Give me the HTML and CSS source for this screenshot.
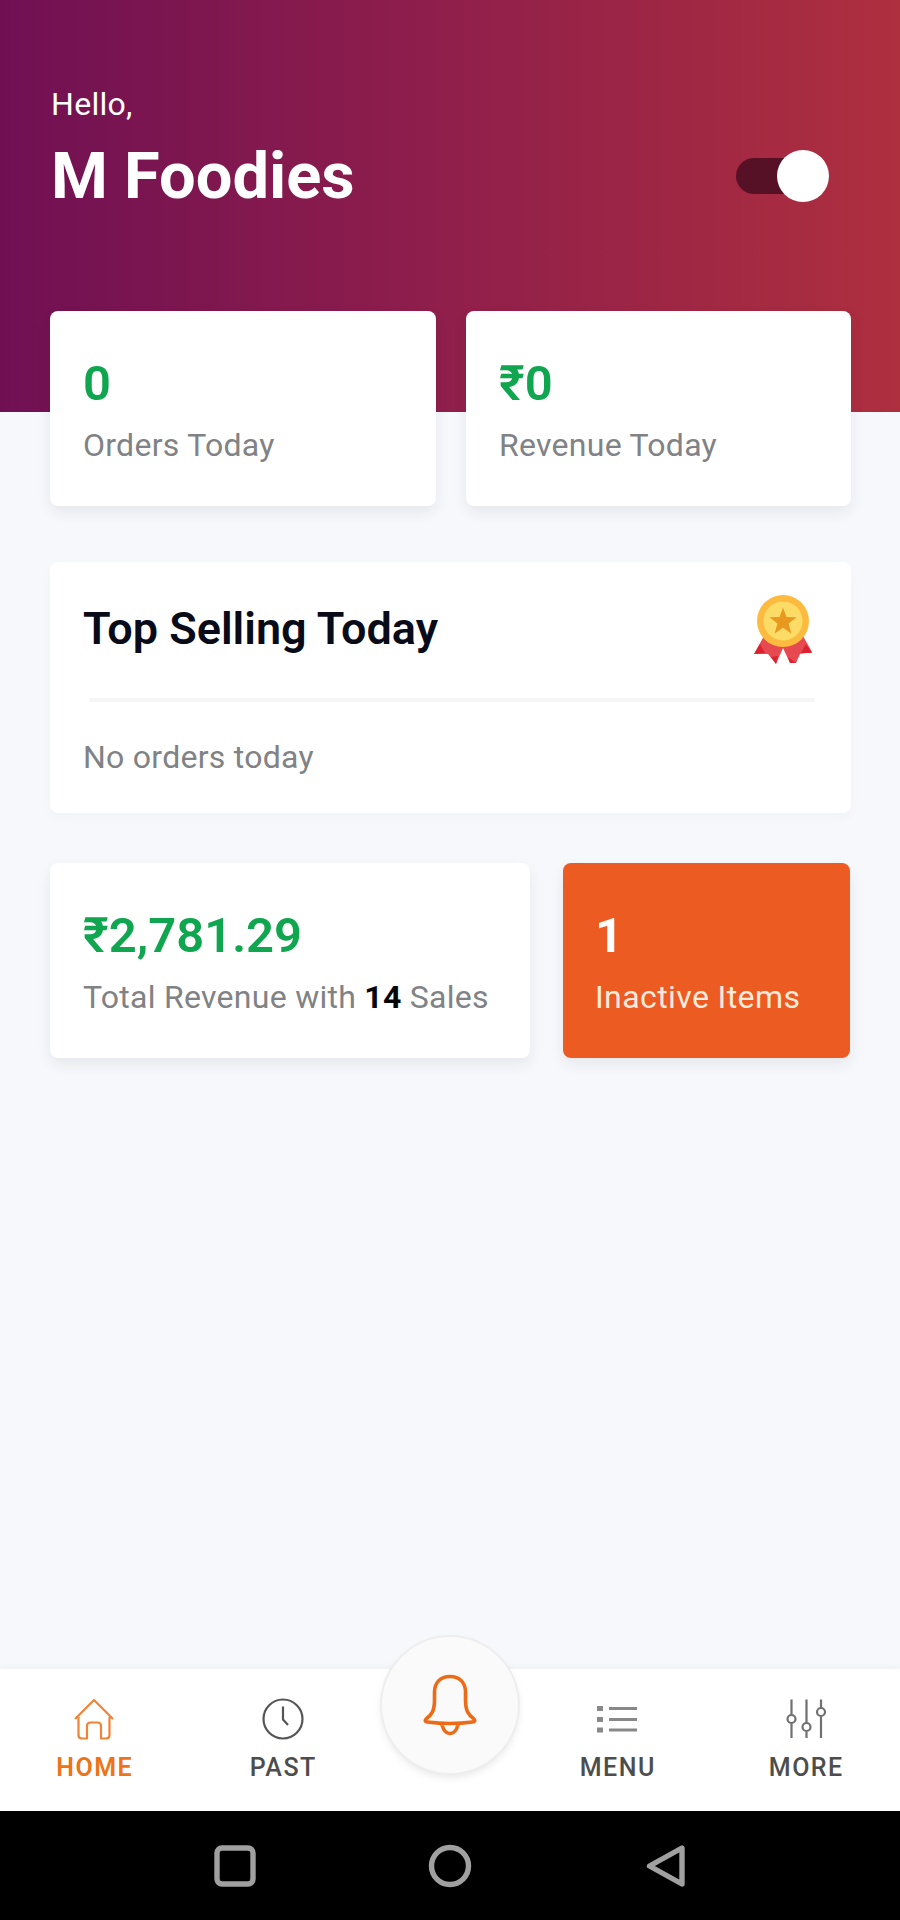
FILE: index.html
```html
<!DOCTYPE html>
<html lang="en">
<head>
<meta charset="utf-8">
<title>M Foodies</title>
<link rel="stylesheet" href="styles.css">
</head>
<body>
<div class="app">
  <header class="hero">
    <p class="greeting">Hello,</p>
    <div class="title-row">
      <h1 class="store">M Foodies</h1>
      <div class="toggle"><div class="knob"></div></div>
    </div>
  </header>
  <main class="content">
    <section class="row today">
      <article class="card"><p class="value">0</p><p class="label">Orders Today</p></article>
      <article class="card"><p class="value">₹0</p><p class="label">Revenue Today</p></article>
    </section>
    <section class="selling">
      <div class="selling-head">
        <h2 class="heading">Top Selling Today</h2>
        <svg class="medal" width="58" height="71" viewBox="0 0 58 71">
          <path d="M10 42 L0 60 L14 60 L22 70 L29 54 L36 69 L42 69 L46 60 L58 58 L49 42 Z" fill="#e64a50"/>
          <path d="M6 50 L0 60 L11 59 Z M52 50 L58 59 L47 59 Z M17 63 L22 70 L24 62 Z M34 63 L36 69 L42 69 Z" fill="#dc2230"/>
          <circle cx="29" cy="27" r="26" fill="#fcbb3f"/>
          <circle cx="29" cy="27" r="19.500" fill="#fddb67"/>
          <path d="M29 13.500 L32.400 23 L42.500 23.300 L34.500 29.400 L37.400 39.500 L29 33.700 L20.600 39.500 L23.500 29.400 L15.500 23.300 L25.600 23 Z" fill="#e8981f"/>
        </svg>
      </div>
      <div class="divider"></div>
      <p class="label">No orders today</p>
    </section>
    <section class="row totals">
      <article class="card"><p class="value">₹2,781.29</p><p class="label">Total Revenue with <b class="count">14</b> Sales</p></article>
      <article class="card inactive"><p class="value">1</p><p class="label">Inactive Items</p></article>
    </section>
  </main>
  <nav class="tabs">
    <a class="tab active">
      <svg class="icon" width="42" height="44" viewBox="0 0 42 44"><path d="M2 22 L21 3 L40 22 M5.500 20 V38 Q5.500 41.500 9 41.500 H14 V29 Q14 25.500 17.500 25.500 H24.500 Q28 25.500 28 29 V41.500 H33 Q36.500 41.500 36.500 38 V20"/></svg>
      <span>HOME</span>
    </a>
    <a class="tab">
      <svg class="icon" width="42" height="44" viewBox="0 0 42 44"><circle cx="21" cy="22" r="19.500"/><path d="M21 9.500 V22.500 L26 28"/></svg>
      <span>PAST</span>
    </a>
    <a class="alert">
      <svg class="bell" width="54" height="62" viewBox="0 0 54 62"><path d="M27 2.500 C17 2.500 11.500 9 11.500 18 V26 C11.500 37 8.500 41 3.500 44.500 C1.500 46.500 2 48 4.500 48 Q27 51 49.500 48 C52 48 52.500 46.500 50.500 44.500 C45.500 41 42.500 37 42.500 26 V18 C42.500 9 37 2.500 27 2.500 Z M18 50 Q20 52 20.500 55 Q23 59.500 27 59.500 Q31 59.500 33.500 55 Q34 52 36 50"/></svg>
    </a>
    <a class="tab">
      <svg class="icon menu-icon" width="42" height="44" viewBox="0 0 42 44"><path d="M13 11.500 H41 M13 22.500 H41 M13 33 H41"/><path class="dots" d="M1 11.500 H7 M1 22.500 H7 M1 33 H7"/></svg>
      <span>MENU</span>
    </a>
    <a class="tab">
      <svg class="icon more-icon" width="42" height="44" viewBox="0 0 42 44"><path d="M6.500 2.500 V17.500 M6.500 26 V41 M21.500 2.500 V26 M21.500 34.500 V41 M36 2.500 V10.500 M36 19 V41"/><circle cx="6.500" cy="22" r="4"/><circle cx="21.500" cy="30" r="4"/><circle cx="36" cy="15" r="4"/></svg>
      <span>MORE</span>
    </a>
  </nav>
  <footer class="system">
    <svg width="44" height="44" viewBox="0 0 44 44"><rect x="4" y="4" width="36" height="36" rx="5"/></svg>
    <svg width="44" height="44" viewBox="0 0 44 44"><circle cx="22" cy="22" r="18.500"/></svg>
    <svg width="44" height="44" viewBox="0 0 44 44"><path d="M6.500 22 L39 4 V40 Z"/></svg>
  </footer>
</div>
</body>
</html>
```
FILE: styles.css
```css
* { box-sizing: border-box; margin: 0; padding: 0; }
body { font-family: Roboto, "Liberation Sans", sans-serif; background: #f6f8fc; }
.app { width: 900px; height: 1920px; display: flex; flex-direction: column; overflow: hidden; }

.hero {
  height: 412px;
  flex: none;
  padding: 84px 71px 0 51px;
  background: linear-gradient(90deg, #701053 0%, #901f4b 50%, #ae2f3e 100%);
  color: #fff;
}
.greeting { font-size: 32px; line-height: 40px; letter-spacing: 0.3px; }
.title-row { display: flex; justify-content: space-between; align-items: center; margin-top: 12px; height: 80px; }
.store { font-size: 65px; line-height: 80px; font-weight: 700; }
.toggle { width: 93px; height: 36px; border-radius: 18px; background: #561126; display: flex; justify-content: flex-end; align-items: center; }
.knob { width: 52px; height: 52px; flex: none; border-radius: 50%; background: #fff; }

.content { flex: 1; padding: 0 49px 0 50px; margin-top: -101px; }
.row { display: grid; }
.today { grid-template-columns: 386px 385px; gap: 30px; }
.totals { grid-template-columns: 480px 287px; gap: 33px; margin-top: 50px; }
.card { height: 195px; padding: 45px 33px 0; border-radius: 8px; background: #fff; box-shadow: 0 6px 14px rgba(40, 40, 50, 0.08); white-space: nowrap; }
.value { font-size: 49px; line-height: 56px; font-weight: 600; color: #0fa64f; }
.label { font-size: 32px; line-height: 40px; letter-spacing: 0.27px; color: #808285; }
.card .label { margin-top: 13px; }
.count { color: #050505; font-weight: 700; }
.inactive { padding-left: 32px; background: #ec5b22; }
.inactive .value { color: #fff; font-weight: 700; }
.inactive .label { color: #ffeade; letter-spacing: 0.4px; }

.selling { height: 251px; margin-top: 56px; padding: 32px 33px 0; border-radius: 8px; background: #fff; box-shadow: 0 5px 12px rgba(40, 40, 50, 0.025); }
.selling-head { display: flex; justify-content: space-between; height: 104px; padding-right: 6px; }
.heading { font-size: 45px; line-height: 70px; font-weight: 600; color: #090c18; }
.divider { height: 4px; margin: 0 4px 0 7px; background: #f5f5f6; }
.selling .label { margin-top: 35px; }

.tabs { flex: none; height: 142px; display: grid; grid-template-columns: 188px 189px 146px 188px 189px; background: #fff; box-shadow: 0 -2px 6px rgba(0, 0, 0, 0.04); }
.tab { display: flex; flex-direction: column; align-items: center; padding-top: 28px; font-size: 25px; line-height: 32px; font-weight: 500; letter-spacing: 1.5px; color: #4d4d4d; }
.tab span { margin-top: 11px; padding-left: 1.5px; }
.active { color: #ed7417; font-weight: 600; }
.icon { fill: none; stroke: #555; stroke-width: 2.2; stroke-linejoin: round; }
.active .icon { stroke: #f08435; }
.menu-icon { stroke: #888; stroke-width: 2.8; }
.dots { stroke-width: 5; }
.more-icon { stroke: #707070; }
.alert { width: 136px; height: 136px; margin: -32px auto 0; border-radius: 50%; background: #fafafa; box-shadow: 0 0 0 2px #eee, 0 4px 9px rgba(0, 0, 0, 0.1); display: flex; justify-content: center; padding-top: 37px; }
.bell { fill: none; stroke: #ed6b17; stroke-width: 3.6; stroke-linejoin: round; }

.system { flex: none; height: 109px; background: #000; display: flex; justify-content: center; align-items: center; gap: 171px; }
.system svg { fill: none; stroke: #a0a0a0; stroke-width: 5.4; stroke-linejoin: round; }
```
